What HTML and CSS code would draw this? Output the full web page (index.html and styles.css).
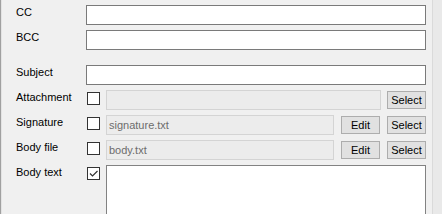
FILE: index.html
```html
<!DOCTYPE html>
<html lang="en">
<head>
  <meta charset="UTF-8">
  <title>Mail settings</title>
  <link rel="stylesheet" href="styles.css">
</head>
<body>
  <div id="panel">
    <div id="form">
      <div class="row">
        <label class="caption">CC</label>
        <input class="text" type="text">
      </div>
      <div class="row">
        <label class="caption">BCC</label>
        <input class="text" type="text">
      </div>
      <div class="row spaced">
        <label class="caption">Subject</label>
        <input class="text" type="text">
      </div>
      <div class="row">
        <label class="caption">Attachment</label>
        <span class="check"></span>
        <div class="path"></div>
        <button class="btn">Select</button>
      </div>
      <div class="row">
        <label class="caption">Signature</label>
        <span class="check"></span>
        <div class="path">signature.txt</div>
        <button class="btn">Edit</button>
        <button class="btn">Select</button>
      </div>
      <div class="row">
        <label class="caption">Body file</label>
        <span class="check"></span>
        <div class="path">body.txt</div>
        <button class="btn">Edit</button>
        <button class="btn">Select</button>
      </div>
      <div class="row tall">
        <label class="caption">Body text</label>
        <span class="check checked">
          <svg width="11" height="11" viewBox="0 0 11 11"><path d="M2 5.5 L4.5 8 L9.5 3" fill="none" stroke="#333" stroke-width="1.2"/></svg>
        </span>
        <textarea class="body"></textarea>
      </div>
    </div>
    <div id="scroll"></div>
  </div>
</body>
</html>
```

FILE: styles.css
```css
html, body {
  margin: 0;
  padding: 0;
  background: #f0f0f0;
  font-family: "Liberation Sans", Arial, sans-serif;
  font-size: 11px;
  color: #000;
  overflow: hidden;
}
#panel {
  display: flex;
  height: 214px;
  overflow: hidden;
  border-left: 1px solid #a0a0a0;
  box-shadow: inset 1px 0 0 #e3e3e3;
}
#form {
  width: 410px;
  padding: 5px 0 0 15px;
}
.row {
  display: flex;
  align-items: flex-start;
  height: 20px;
  margin-bottom: 5px;
}
.row.spaced {
  margin-top: 15px;
}
.row.tall {
  height: 49px;
  margin-bottom: 0;
}
.caption {
  width: 70px;
  flex: none;
  line-height: 15px;
}
.text {
  width: 340px;
  height: 20px;
  box-sizing: border-box;
  margin: 0;
  border: 1px solid #7a7a7a;
  background: #fff;
  font: inherit;
}
.check {
  width: 13px;
  height: 13px;
  box-sizing: border-box;
  flex: none;
  margin: 2px 6px 0 1px;
  border: 1px solid #333;
  background: #fff;
  display: flex;
  align-items: center;
  justify-content: center;
}
.path {
  flex: 1;
  height: 20px;
  box-sizing: border-box;
  border: 1px solid #d4d4d4;
  background: #ececec;
  color: #6d6d6d;
  padding-left: 2px;
  line-height: 18px;
}
.btn {
  width: 39px;
  height: 18px;
  flex: none;
  margin: 1px 0 0 6px;
  padding: 0;
  box-sizing: border-box;
  border: 1px solid #adadad;
  background: #e1e1e1;
  font: inherit;
  color: #000;
  line-height: 16px;
}
.path + .btn:not(:last-child),
.path + .btn + .btn {
  margin-left: 7px;
}
.body {
  flex: 1;
  height: 60px;
  box-sizing: border-box;
  margin: 0;
  border: 1px solid #828282;
  background: #fff;
  resize: none;
}
#scroll {
  margin-left: auto;
  width: 9px;
  border-left: 1px solid #dadada;
  background: #e9e9e9;
}
```
